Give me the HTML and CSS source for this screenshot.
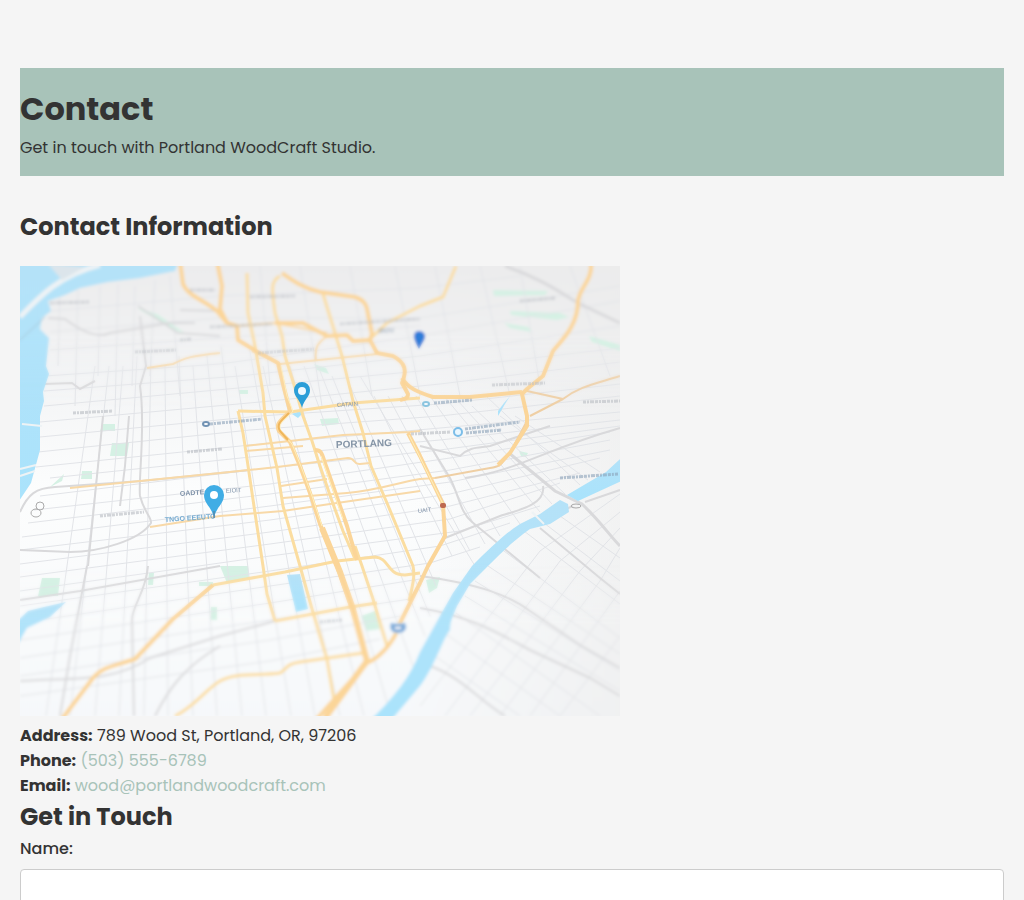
FILE: index.html
```html
<!DOCTYPE html>
<html lang="en">
<head>
    <meta charset="UTF-8">
    <meta name="viewport" content="width=device-width, initial-scale=1">
    <title>Contact - Portland WoodCraft Studio</title>
    <link rel="stylesheet" href="styles.css">
</head>
<body>

<header class="page-header">
    <h1>Contact</h1>
    <p>Get in touch with Portland WoodCraft Studio.</p>
</header>

<main>
    <section class="contact-info">
        <h2>Contact Information</h2>
        <svg class="map" viewBox="0 0 600 450" role="img" aria-label="Map of Portland">
            <defs>
                <linearGradient id="land" x1="0" y1="0" x2="0" y2="1">
                    <stop offset="0" stop-color="#ebebec"/>
                    <stop offset=".25" stop-color="#f3f4f5"/>
                    <stop offset=".5" stop-color="#fcfdfd"/>
                    <stop offset="1" stop-color="#f6f8fa"/>
                </linearGradient>
                <linearGradient id="shade" x1="0" y1="0" x2="1" y2="0">
                    <stop offset=".65" stop-color="#ebebeb" stop-opacity="0"/>
                    <stop offset="1" stop-color="#ebebeb" stop-opacity=".6"/>
                </linearGradient>
                <linearGradient id="water" x1="0" y1="0" x2="0" y2="1">
                    <stop offset="0" stop-color="#b5e2f8"/>
                    <stop offset="1" stop-color="#a9e3fc"/>
                </linearGradient>
                <linearGradient id="fade" x1="0" y1="0" x2="0" y2="1">
                    <stop offset="0" stop-color="#fff"/>
                    <stop offset=".15" stop-color="#fff"/>
                    <stop offset=".32" stop-color="#000"/>
                    <stop offset=".66" stop-color="#000"/>
                    <stop offset=".8" stop-color="#fff"/>
                </linearGradient>
                <mask id="edges"><rect width="600" height="450" fill="url(#fade)"/></mask>
                <filter id="soft" x="-10" y="-10" width="620" height="470" filterUnits="userSpaceOnUse"><feGaussianBlur stdDeviation=".6"/></filter>
                <filter id="far" x="-10" y="-10" width="620" height="470" filterUnits="userSpaceOnUse"><feGaussianBlur stdDeviation="1.4"/></filter>
            </defs>

            <g id="streets" filter="url(#soft)">
                <rect x="-10" y="-10" width="620" height="470" fill="url(#land)"/>
                <rect x="-10" y="-10" width="620" height="470" fill="url(#shade)"/>

                <!-- parks -->
                <g fill="#d5f1e4">
                    <path d="M92 177h17l-2 13H90zM83 158h12v7H80zM44 208l-14 13 12-6zM62 205h10v8H61zM22 312h18l-2 18H18zM129 307h5l-1 12h-5zM179 316h14v4h-14zM191 341h6v13h-6zM200 300h28l1 12-22 5zM300 153l18-1 1 6-17 2zM341 350l14-5 5 18-14 2zM406 314l14-3-3 11-8 5zM499 185l9 2-2 4-5-1zM294 98l12 4 3 6-12-4zM473 24l55 1-3 4-51 1zM490 45l50 2 9 4-12 3-46-5zM484 57l24 4 4 5-22-4zM569 70l31 9v6l-28-9zM117 42l20 6 28 19-13-4zM219 124h9v4h-9z"/>
                </g>

                <!-- fine street grid -->
                <g class="fine">
                    <path d="M75 100 26 450M89 100 50 450M103 100 75 450M117 90 99 450M131 90 124 450M145 100 148 450M159 90 173 450M173 100 197 450M187 90 222 450M201 80 246 450M215 100 271 450M229 80 295 450M243 100 320 450M257 100 344 450M270 100 368 440M284 100 393 400M298 100 405 370M312 110 410 350M326 110 416 320M340 110 455 300M354 130 432 290M368 130 450 285M382 130 465 278M396 130 480 270M410 130 500 258M424 130 520 246M438 135 532 238M452 140 545 228M466 130 560 219M480 150 568 214M495 150 580 206"/>
                    <path d="M25 110 200 98 400 70 600 35M24 125 220 110 400 90 600 60M24 140 240 120 400 105 600 82M20 156 240 136 420 118 600 96M20 171 240 150 420 138 600 118M18 186 230 164 420 150 600 130M16 201 240 178 420 162 600 146M30 212 240 190 420 174 600 154M20 230 240 203 420 184 600 160M14 244 250 218 430 192 590 166M8 257 250 228 430 204 590 174M2 271 250 240 430 216 590 184M0 284 250 254 430 228 580 192M0 298 250 266 430 240 560 207M0 311 250 278 430 253 540 217M0 325 250 290 440 265 520 240M0 340 250 305 420 280 490 257M0 357 250 320 410 297 460 281M0 374 250 337 400 313M0 392 250 354 390 333M0 410 250 374 380 350M0 430 250 395 360 373"/>
                    <path d="M600 228 520 285 400 440M600 246 540 295 425 450M600 262 560 305 450 450M600 282 580 315 480 450M600 325 510 450M600 370 540 450M500 262 600 338M520 254 600 315M540 250 600 292M480 282 600 372M468 300 600 388M455 315 600 405M445 330 600 425M436 347 580 450M426 368 540 450M415 390 500 450"/>
                    <path d="M40 20 38 100M58 24 55 140M80 20 78 110M98 18 95 150M115 20 112 120M135 14 130 110M150 10 160 130M30 45 200 30 400 22 500 10M30 66 200 52 400 52 600 20M30 84 200 72 400 60M240 0 250 120M280 0 302 140M330 0 352 130M375 0 400 130M415 0 440 130M460 0 490 130M500 0 520 120M550 0 590 110"/>
                </g>

                <!-- larger grey streets -->
                <g class="street">
                    <path d="M0 246C8 228 16 222 35 221L122 215 230 204"/>
                    <path d="M120 50 126 100 120 120C126 160 118 215 120 230 124 246 132 252 131 257 120 274 80 286 50 286L0 284"/>
                    <path d="M67 300 50 390 40 450M83 150 68 300M109 150 105 200 100 240"/>
                    <path d="M128 300C126 326 112 340 112 354L114 450"/>
                    <path d="M0 415C50 411 90 418 130 392L200 370 255 355"/>
                    <path d="M200 380C166 400 150 420 135 450"/>
                    <path d="M0 334 60 325 200 300M24 118 52 117 60 123 75 115"/>
                    <path d="M28 52 45 53C65 68 80 72 90 67L150 57 175 57"/>
                    <path d="M118 40 158 67 200 70"/>
                    <path class="major" d="M485 0C525 14 545 30 560 38L600 57"/>
                    <path class="major" d="M489 187 535 225 562 238C580 255 590 270 600 280"/>
                    <path d="M400 310C460 318 490 330 510 345L560 379 600 402"/>
                    <path d="M400 342C450 350 480 368 510 384L570 412 600 430"/>
                    <path d="M410 400C440 410 460 435 485 450"/>
                    <path d="M400 180 440 190C450 180 460 182 470 180L530 160M523 220C526 238 500 244 480 250L425 272"/>
                    <path d="M400 163 430 212C440 232 440 246 452 256L520 312M565 236 600 224M553 240 518 255M520 262 580 312 600 328"/>
                    <path d="M445 212C500 204 520 185 600 162M200 45 160 44"/>
                </g>

                <!-- lake and river -->
                <g fill="url(#water)">
                    <path d="M-9-9H160L155 5 120 12 88 16 60 22 45 29 28 35 31 45 22 52 20 63 29 72 26 100 29 108 23 126 24 135 20 150 20 184 11 217-9 247z"/>
                    <path d="M-9 361 8 345 24 341 46 336 30 351 7 362-9 390z"/>
                    <path d="M267 309 280 308 288 343 276 346z"/>
                    <path d="M610 184 586 206 547 229 558 235 610 211z"/>
                    <path d="M540 234 548 238 549 246 530 258 510 263C493 275 480 288 468 300L450 318 437 340C433 350 430 355 430 364 423 372 415 400 400 420L362 465 338 465C370 438 390 412 400 386L420 350 433 327 452 300C468 284 484 268 500 258L520 248z"/>
                    <path d="M478 145 484 137 490 130 485 138 478 150zM272 148l8-3 2 3-4 4z"/>
                </g>
                <g fill="none" stroke="#eef3f5">
                    <path d="M0 51C20 30 40 9 80-1" stroke-width="5"/>
                    <path d="M0 203 16 199M0 210 15 205M2 158 22 160" stroke-width="2"/>
                    <path d="M28-2 42 14 65 1z" fill="#dce5eb" stroke="none"/>
                    <path d="M512 246 524 258" stroke-width="2"/>
                </g>
                <path d="M0 74 25 51" stroke="#a5c5d4" fill="none"/>

                <!-- main roads -->
                <g class="road thin">
                    <path d="M127 102 153 98C165 92 170 90 200 87M296 95C294 78 300 76 307 70"/>
                    <path d="M260 98 357 88M225 180 323 169 390 166 400 165"/>
                    <path d="M225 185 283 180M50 222 200 207 257 201 328 192C336 192 333 199 340 198L350 197"/>
                    <path d="M261 220 307 213M263 232 327 227C360 224 380 216 400 213L415 212M130 261 200 250 263 245 310 238 400 225"/>
                    <path d="M232 85 260 98M307 67 255 57 215 60"/>
                </g>
                <g class="road">
                    <path d="M227 7 228 47 235 80 243 127 245 150 257 202 263 240 280 300 292 343 307 393 315 440"/>
                    <path d="M218 145 223 167 227 193 235 247 243 300 247 328 255 355"/>
                    <path d="M260 10C250 15 252 24 255 47L262 70 265 90 275 122 283 150 292 175 300 200 312 235 323 265 335 293"/>
                    <path d="M303 28 315 67 322 90 333 135 343 167 351 200 367 237 393 300C395 310 393 318 389 335"/>
                    <path d="M335 280 342 300 353 333 367 380"/>
                    <path d="M218 145 270 146 333 137 400 132"/>
                    <path d="M193 319 265 306 317 295 355 291C370 292 366 309 385 309L400 307"/>
                    <path d="M255 355 330 341 357 337M155 450C175 440 185 424 200 415 215 406 240 410 260 407 268 402 266 398 280 396L343 387"/>
                    <path d="M350 73 367 57 400 40 423 31 436 0"/>
                </g>
                <g class="road outer">
                    <path d="M507 125 543 133C560 120 575 118 600 110M543 133 510 150"/>
                    <path d="M507 155 490 187C480 199 482 200 470 202L415 212"/>
                </g>
                <g class="road wide">
                    <path d="M160-5 163 18C168 30 184 34 197 45L207 57 217 60 218 74 236 85 258 97 264 122 270 145C262 154 255 157 259 165L270 176 280 200 290 227 300 258 317 300 330 337 347 395"/>
                    <path d="M197-5 202 20 200 43 207 57"/>
                    <path d="M262 7C275 16 285 23 300 26L335 31C347 35 347 42 348 48L352 68 350 74"/>
                    <path d="M255 57 283 57 307 70 327 69 333 75 350 74 357 87 373 90C386 97 387 105 382 117L388 128C388 133 384 133 380 134"/>
                    <path d="M382 112C388 122 397 126 413 131L450 131 502 126"/>
                    <path d="M571-5C573 15 560 20 558 35 558 60 541 75 533 85L523 110 507 123 502 128 507 150 507 160 490 187 478 199"/>
                    <path d="M388 167 400 190 423 238 425 270 408 300 400 317 380 357C376 372 363 390 347 397L310 438 295 455"/>
                    <path d="M193 319 153 353 115 393C95 400 83 400 73 412L42 453"/>
                    <path d="M295 184C303 184 302 190 306 200L327 260 337 294"/>
                </g>
                <path class="road freeway" d="M302 262 320 306 333 343 347 395 305 452"/>
                <g fill="none" stroke="#fff0bb">
                    <path d="M261 100 267 130 273 145C266 154 257 157 261 165L272 178 282 203 292 230 302 260M301 190 323 253M389 169 423 238"/>
                </g>
                <path d="M269 147C261 155 256 158 260 165L268 174" fill="none" stroke="#efb65c" stroke-width="2"/>

                <!-- street names too small to read -->
                <g class="names">
                    <path d="M30 37 70 36M170 24 195 24M115 86 156 84M160 74 172 73M53 147 93 145M190 61 252 58M238 87 294 83M230 31 275 30M320 58 400 53M500 35 536 32M472 119 525 117M563 136 600 135M80 250 124 246M167 186 202 183M300 356 322 354M391 168 430 166"/>
                    <path d="M540 212 598 208M190 158 242 153M414 137 452 134M445 163 500 156M446 167 482 164" stroke="#8ba2b9"/>
                </g>
                <g class="labels">
                    <text class="city" x="316" y="182" transform="rotate(-2 316 182)">PORTLANG</text>
                    <text class="district" x="160" y="230" transform="rotate(-4 160 230)">OADTE</text>
                    <text x="206" y="227" transform="rotate(-4 206 227)">EIOIT</text>
                    <text class="district blue" x="145" y="256" transform="rotate(-4 145 256)">TNGO EEEUTO</text>
                    <text x="317" y="141" transform="rotate(-3 317 141)">CATAIN</text>
                    <text x="398" y="247" transform="rotate(-7 398 247)">UAIT</text>
                    <text x="358" y="67" transform="rotate(-4 358 67)">JBOU</text>
                </g>
                <g fill="none" stroke="#aaa">
                    <circle cx="20" cy="240" r="4"/>
                    <ellipse cx="16" cy="247" rx="5" ry="4"/>
                    <ellipse cx="556" cy="240" rx="5" ry="2"/>
                </g>
                <circle cx="438" cy="166" r="4" fill="#eaf7ff" stroke="#7bbde8" stroke-width="2"/>
                <ellipse cx="186" cy="158" rx="3" ry="2" fill="#fff" stroke="#7192b3" stroke-width="2"/>
                <ellipse cx="406" cy="138" rx="3" ry="2" fill="#fff" stroke="#87c3df" stroke-width="2"/>
                <rect x="420" y="237" width="6" height="5" rx="2" fill="#bd6750"/>
                <path d="M371 357Q378 359 385 357C388 363 384 367 378 367S369 363 371 357z" fill="#80acd9" stroke="#bdd7ee"/>
                <path d="M375 362h6" stroke="#fff" stroke-width="2"/>
                <path d="M399 83C396 77 394 74 394 70 394 67 396 65 399 65S405 67 405 70C405 74 402 77 399 83z" fill="#2f7bd8"/>
            </g>

            <g mask="url(#edges)"><use href="#streets" filter="url(#far)"/></g>

            <!-- pins -->
            <g filter="url(#soft)">
                <path d="M282 142C280 133 274 131 274 124A8 8 0 0 1 290 124C290 131 284 133 282 142z" fill="#2c9ed8"/>
                <circle cx="282" cy="125" r="4" fill="#eef9ff"/>
                <path d="M194 252C192 241 184 238 184 229A10 10 0 0 1 204 229C204 238 196 241 194 252z" fill="#41ade5"/>
                <circle cx="194" cy="229" r="4" fill="#fff"/>
                <path d="M194 245v7" stroke="#5a7892"/>
            </g>
        </svg>
        <p><strong>Address:</strong> 789 Wood St, Portland, OR, 97206</p>
        <p><strong>Phone:</strong> <a href="tel:5035556789">(503) 555-6789</a></p>
        <p><strong>Email:</strong> <a href="mailto:wood@portlandwoodcraft.com">wood@portlandwoodcraft.com</a></p>
    </section>

    <section class="contact-form">
        <h2>Get in Touch</h2>
        <form>
            <label for="name">Name:</label>
            <input type="text" id="name" name="name">
        </form>
    </section>
</main>

</body>
</html>
```
FILE: styles.css
```css
* {
    margin: 0;
    padding: 0;
    box-sizing: border-box;
}
body {
    padding: 68px 20px 0;
    background: #f5f5f5;
    color: #333;
    font-family: Poppins, Inter, "Open Sans", sans-serif;
    font-size: 16px;
    line-height: 25px;
}
h1 {
    font-size: 32px;
    line-height: 50px;
}
h2 {
    font-size: 24px;
    line-height: 38px;
}
a {
    color: #a8c3b9;
    text-decoration: none;
}
.page-header {
    padding: 16px 0;
    margin-bottom: 32px;
    background: #a8c3b9;
}
.page-header h1 {
    margin-bottom: 1px;
}
.contact-info h2 {
    margin-bottom: 20px;
}
.map {
    display: block;
    width: 100%;
    max-width: 600px;
    height: auto;
    margin-bottom: 7px;
}
.contact-form label {
    display: block;
    font-weight: 500;
    margin-bottom: 8px;
}
.contact-form input {
    display: block;
    width: 100%;
    height: 48px;
    padding: 12px;
    border: 1px solid #ccc;
    border-radius: 4px;
    background: #fff;
    font: inherit;
}

/* map */
.fine {
    fill: none;
    stroke: #e2e4e8;
    stroke-width: 1px;
}
.street {
    fill: none;
    stroke: #d9d9db;
    stroke-width: 2px;
}
.major {
    stroke-width: 3px;
}
.road {
    fill: none;
    stroke: #fbdda0;
    stroke-width: 3px;
    stroke-linejoin: round;
}
.thin {
    stroke: #f8d9a8;
    stroke-width: 2px;
}
.outer {
    stroke: #efcfa4;
    stroke-width: 2px;
}
.wide {
    stroke: #fbd598;
    stroke-width: 4px;
}
.freeway {
    stroke: #fbd598;
    stroke-width: 6px;
}
.names {
    fill: none;
    stroke: #b8bcc2;
    stroke-width: 3px;
    stroke-dasharray: 3 1 2 1 4 1;
    opacity: .6;
}
.labels {
    fill: #8295ab;
    font-family: "Liberation Sans", sans-serif;
    font-size: 6px;
}
.labels .city {
    fill: #8494a6;
    font-size: 10px;
    font-weight: bold;
}
.labels .district {
    font-size: 7px;
    font-weight: bold;
}
.labels .blue {
    fill: #75abd1;
}
```
